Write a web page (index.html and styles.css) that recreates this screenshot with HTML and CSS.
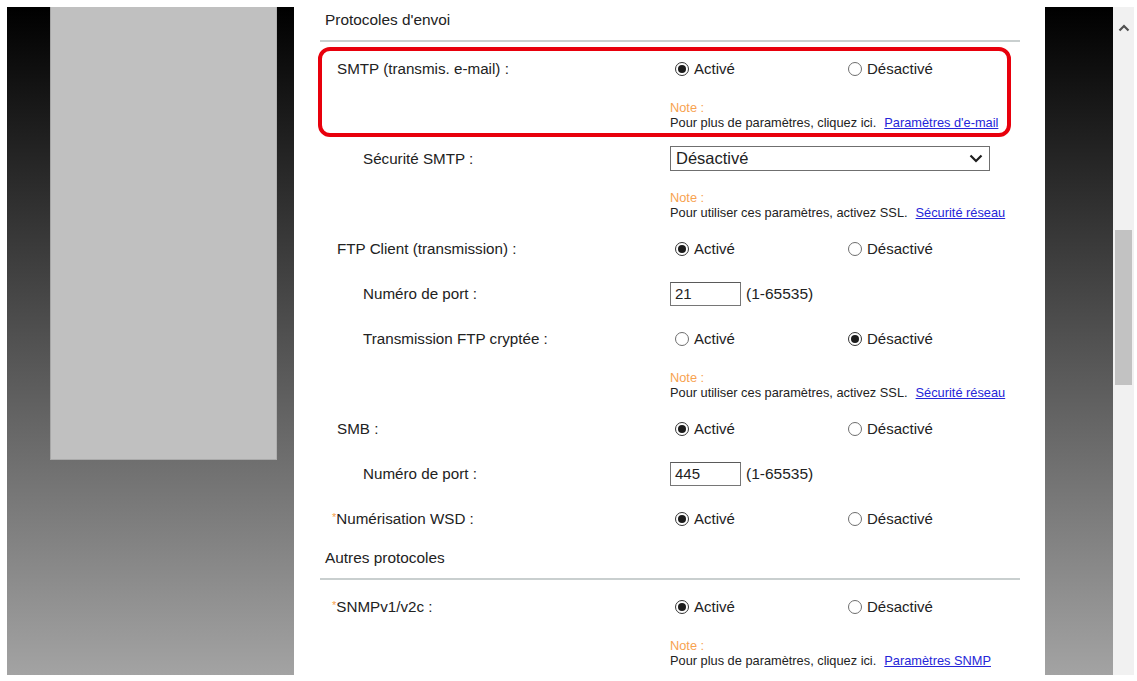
FILE: index.html
```html
<!DOCTYPE html>
<html lang="fr">
<head>
<meta charset="utf-8">
<title>Protocoles</title>
<link rel="stylesheet" href="styles.css">
</head>
<body>
<div class="screen">
  <div class="side side-left"><div class="panel"></div></div>

  <div class="main">
    <div class="content">
      <div class="sec-head first">Protocoles d'envoi</div>
      <div class="sec-rule"></div>

      <div class="row">
        <div class="label">SMTP (transmis. e-mail) :</div>
        <div class="value radios">
          <div class="opt"><span class="radio on"></span><span class="opt-text">Activé</span></div>
          <div class="opt"><span class="radio"></span><span class="opt-text">Désactivé</span></div>
        </div>
      </div>
      <div class="note-row">
        <div class="note-title">Note :</div>
        <div class="note-text">Pour plus de paramètres, cliquez ici.<a class="note-link" href="#">Paramètres d'e-mail</a></div>
      </div>

      <div class="row">
        <div class="label sub">Sécurité SMTP :</div>
        <div class="value">
          <div class="select"><span>Désactivé</span>
            <svg class="chev" width="14" height="9" viewBox="0 0 14 9"><polyline points="1.5,1.5 7,7 12.5,1.5" fill="none" stroke="#1e1e1e" stroke-width="2.2"/></svg>
          </div>
        </div>
      </div>
      <div class="note-row">
        <div class="note-title">Note :</div>
        <div class="note-text">Pour utiliser ces paramètres, activez SSL.<a class="note-link" href="#">Sécurité réseau</a></div>
      </div>

      <div class="row">
        <div class="label">FTP Client (transmission) :</div>
        <div class="value radios">
          <div class="opt"><span class="radio on"></span><span class="opt-text">Activé</span></div>
          <div class="opt"><span class="radio"></span><span class="opt-text">Désactivé</span></div>
        </div>
      </div>

      <div class="row">
        <div class="label sub">Numéro de port :</div>
        <div class="value"><span class="port">21</span><span class="range">(1-65535)</span></div>
      </div>

      <div class="row">
        <div class="label sub">Transmission FTP cryptée :</div>
        <div class="value radios">
          <div class="opt"><span class="radio"></span><span class="opt-text">Activé</span></div>
          <div class="opt"><span class="radio on"></span><span class="opt-text">Désactivé</span></div>
        </div>
      </div>
      <div class="note-row">
        <div class="note-title">Note :</div>
        <div class="note-text">Pour utiliser ces paramètres, activez SSL.<a class="note-link" href="#">Sécurité réseau</a></div>
      </div>

      <div class="row">
        <div class="label">SMB :</div>
        <div class="value radios">
          <div class="opt"><span class="radio on"></span><span class="opt-text">Activé</span></div>
          <div class="opt"><span class="radio"></span><span class="opt-text">Désactivé</span></div>
        </div>
      </div>

      <div class="row">
        <div class="label sub">Numéro de port :</div>
        <div class="value"><span class="port">445</span><span class="range">(1-65535)</span></div>
      </div>

      <div class="row">
        <div class="label"><span class="req">*</span>Numérisation WSD :</div>
        <div class="value radios">
          <div class="opt"><span class="radio on"></span><span class="opt-text">Activé</span></div>
          <div class="opt"><span class="radio"></span><span class="opt-text">Désactivé</span></div>
        </div>
      </div>

      <div class="sec-head">Autres protocoles</div>
      <div class="sec-rule"></div>

      <div class="row">
        <div class="label"><span class="req">*</span>SNMPv1/v2c :</div>
        <div class="value radios">
          <div class="opt"><span class="radio on"></span><span class="opt-text">Activé</span></div>
          <div class="opt"><span class="radio"></span><span class="opt-text">Désactivé</span></div>
        </div>
      </div>
      <div class="note-row">
        <div class="note-title">Note :</div>
        <div class="note-text">Pour plus de paramètres, cliquez ici.<a class="note-link" href="#">Paramètres SNMP</a></div>
      </div>
    </div>
    <div class="highlight"></div>
  </div>

  <div class="side side-right"></div>

  <div class="scrollbar">
    <div class="sb-arrow">
      <svg width="12" height="8" viewBox="0 0 12 8"><polyline points="1.5,6.5 6,2 10.5,6.5" fill="none" stroke="#505050" stroke-width="2.2"/></svg>
    </div>
    <div class="sb-thumb"></div>
  </div>
</div>
</body>
</html>
```

FILE: styles.css
```css
* { box-sizing: border-box; }

html, body {
  margin: 0;
  padding: 0;
  background: #ffffff;
}

body {
  font-family: "Liberation Sans", Arial, sans-serif;
  color: #222222;
}

.screen {
  width: 1137px;
  height: 681px;
  padding: 7px 3px 6px 7px;
  display: flex;
  overflow: hidden;
}

.side {
  background: linear-gradient(to bottom, #000000 0%, #a3a3a3 100%);
}

.side-left {
  width: 287px;
  padding-left: 43px;
}

.panel {
  width: 227px;
  height: 453px;
  background: #c0c0c0;
  border-left: 1px solid #a6a6a6;
  border-right: 1px solid #b0b0b0;
  border-bottom: 1px solid #aaaaaa;
}

.side-right {
  width: 68px;
}

.main {
  width: 751px;
  background: #ffffff;
  position: relative;
  overflow: hidden;
}

.content {
  padding: 0 25px 0 26px;
  font-size: 15px;
}

.sec-head {
  height: 37px;
  padding: 3px 0 0 5px;
  line-height: 28px;
  font-size: 15.4px;
  color: #222222;
}

.sec-head.first {
  margin-top: -4px;
}

.sec-rule {
  height: 2px;
  background: #c9cfcf;
  margin-bottom: 4px;
}

.row {
  height: 45px;
  display: grid;
  grid-template-columns: 350px 1fr;
  align-items: center;
}

.label {
  padding-left: 17px;
  font-size: 15.2px;
  white-space: nowrap;
}

.label.sub {
  padding-left: 43px;
}

.req {
  color: #f5a04c;
  font-size: 11px;
  margin-left: -5px;
  vertical-align: 3px;
}

.value {
  display: flex;
  align-items: center;
}

.opt {
  width: 173px;
  padding-left: 5px;
  display: flex;
  align-items: center;
}

.radio {
  width: 14px;
  height: 14px;
  border: 1px solid #6e6e6e;
  border-radius: 50%;
  background: #ffffff;
  display: flex;
  align-items: center;
  justify-content: center;
}

.radio.on {
  border-color: #333333;
}

.radio.on::after {
  content: "";
  width: 8px;
  height: 8px;
  border-radius: 50%;
  background: #1c1c1c;
}

.opt-text {
  margin-left: 5px;
  font-size: 15px;
}

.select {
  width: 320px;
  height: 25px;
  border: 1px solid #6f6f6f;
  padding: 0 6px 0 5px;
  display: flex;
  align-items: center;
  justify-content: space-between;
  font-size: 16.5px;
}

.port {
  width: 71px;
  height: 24px;
  border: 1px solid #767676;
  border-top-color: #5a5a5a;
  padding-left: 4px;
  line-height: 22px;
  font-size: 15px;
}

.range {
  margin-left: 5px;
  font-size: 15.5px;
}

.note-row {
  height: 45px;
  padding: 9px 0 0 350px;
  font-size: 12.8px;
  line-height: 15px;
  white-space: nowrap;
}

.note-title {
  color: #f7a24f;
}

.note-link {
  margin-left: 8px;
  color: #2525d8;
  text-decoration: underline;
}

.highlight {
  position: absolute;
  left: 24px;
  top: 40px;
  width: 693px;
  height: 90px;
  border: 4px solid #e8000c;
  border-radius: 12px;
}

.scrollbar {
  width: 21px;
  background: #f1f1f1;
  display: flex;
  flex-direction: column;
  align-items: center;
}

.sb-arrow {
  height: 42px;
  display: flex;
  align-items: center;
  justify-content: center;
}

.sb-thumb {
  margin-top: 181px;
  width: 17px;
  height: 155px;
  background: #c2c2c2;
}
```
